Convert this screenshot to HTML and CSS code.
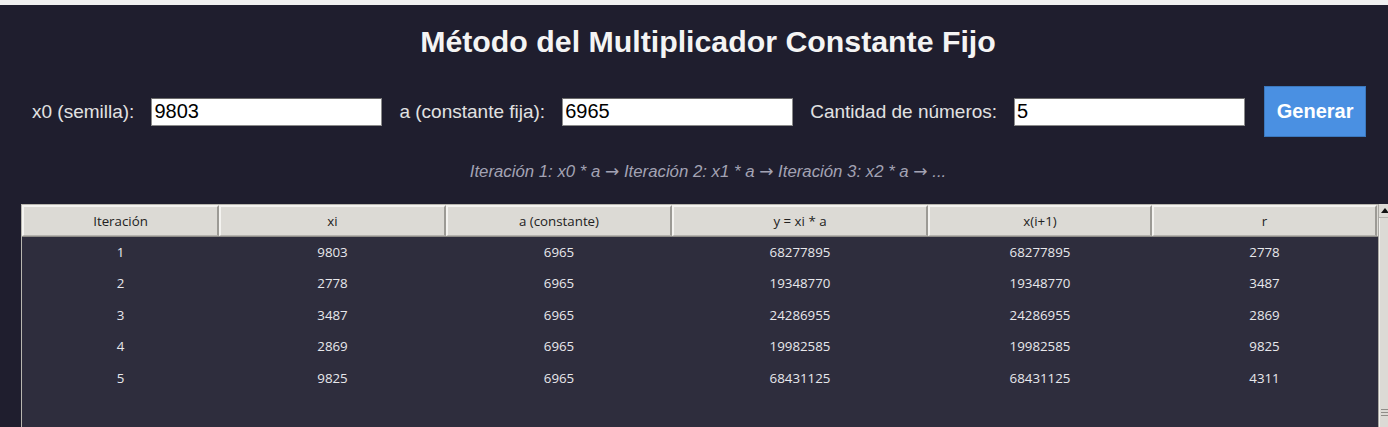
FILE: index.html
```html
<!DOCTYPE html>
<html lang="es">
<head>
<meta charset="utf-8">
<title>Método del Multiplicador Constante Fijo</title>
<link rel="stylesheet" href="styles.css">
</head>
<body>
<div class="topstrip"></div>
<main class="app">
  <h1 class="title">Método del Multiplicador Constante Fijo</h1>
  <div class="form-row">
    <label class="lbl" for="x0">x0 (semilla):</label>
    <input class="inp" id="x0" type="text" value="9803">
    <label class="lbl" for="a">a (constante fija):</label>
    <input class="inp" id="a" type="text" value="6965">
    <label class="lbl" for="n">Cantidad de números:</label>
    <input class="inp" id="n" type="text" value="5">
    <button class="btn" type="button">Generar</button>
  </div>
  <p class="hint">Iteración 1: x0 * a <span class="arr">→</span> Iteración 2: x1 * a <span class="arr">→</span> Iteración 3: x2 * a <span class="arr">→</span> ...</p>
  <div class="table-wrap">
    <div class="table">
      <div class="thead">
        <div class="th">Iteración</div>
        <div class="th">xi</div>
        <div class="th">a (constante)</div>
        <div class="th">y = xi * a</div>
        <div class="th">x(i+1)</div>
        <div class="th">r</div>
      </div>
      <div class="tbody">
        <div class="tr"><div>1</div><div>9803</div><div>6965</div><div>68277895</div><div>68277895</div><div>2778</div></div>
        <div class="tr"><div>2</div><div>2778</div><div>6965</div><div>19348770</div><div>19348770</div><div>3487</div></div>
        <div class="tr"><div>3</div><div>3487</div><div>6965</div><div>24286955</div><div>24286955</div><div>2869</div></div>
        <div class="tr"><div>4</div><div>2869</div><div>6965</div><div>19982585</div><div>19982585</div><div>9825</div></div>
        <div class="tr"><div>5</div><div>9825</div><div>6965</div><div>68431125</div><div>68431125</div><div>4311</div></div>
      </div>
    </div>
    <div class="scrollbar">
      <div class="sb-arrow"></div>
      <div class="sb-track"><div class="sb-grip"></div></div>
    </div>
  </div>
</main>
</body>
</html>
```

FILE: styles.css
```css
* { box-sizing: border-box; }
html, body {
  margin: 0;
  padding: 0;
  height: 100%;
  overflow: hidden;
}
body {
  background: #1f1e2e;
  font-family: "Liberation Sans", Arial, sans-serif;
  color: #e6e6e6;
}
.topstrip {
  height: 5px;
  background: #f0f0f0;
}
.app {
  width: 1416px;
  display: flex;
  flex-direction: column;
}
.title {
  margin: 20px 0 0;
  text-align: center;
  font-size: 30.3px;
  line-height: 34px;
  font-weight: bold;
  color: #f4f4f4;
}
.form-row {
  display: flex;
  align-items: center;
  margin-top: 27px;
  padding-left: 32px;
  height: 51px;
}
.lbl {
  font-size: 19px;
  color: #e2e2e2;
  margin-right: 17px;
}
.inp {
  width: 231px;
  height: 28px;
  margin-right: 17px;
  border: 1px solid #8a8a8a;
  border-top-color: #6a6a6a;
  background: #ffffff;
  font-family: "Liberation Sans", Arial, sans-serif;
  font-size: 20px;
  color: #000;
  padding: 0 2px;
  outline: none;
}
.btn {
  width: 102px;
  height: 51px;
  margin-left: 2px;
  border: 1px solid #3b78bd;
  background: #4a90e2;
  color: #ffffff;
  font-family: "Liberation Sans", Arial, sans-serif;
  font-size: 20px;
  font-weight: bold;
}
.hint {
  margin: 24px 0 0;
  text-align: center;
  font-style: italic;
  font-size: 16.8px;
  line-height: 20px;
  color: #a3a3b4;
}
.arr {
  font-family: "DejaVu Sans", sans-serif;
  font-style: normal;
  font-size: 17px;
}
.table-wrap {
  display: flex;
  margin: 22px 0 0 21px;
  height: 240px;
}
.table {
  width: 1357px;
  flex: none;
  border-left: 1px solid #b9b7b0;
  border-top: 1px solid #b9b7b0;
  background: #2e2d3d;
  display: flex;
  flex-direction: column;
  font-family: "Open Sans", "Noto Sans", sans-serif;
  font-size: 13.3px;
}
.thead, .tr {
  display: grid;
  grid-template-columns: 197px 227px 226px 256px 224px 225px;
}
.thead {
  height: 32px;
  background: #dcdad5;
  border-bottom: 1px solid #8d8b87;
}
.th {
  display: flex;
  align-items: center;
  justify-content: center;
  color: #222;
  border-top: 2px solid #f4f3f0;
  border-left: 2px solid #f4f3f0;
  border-right: 2px solid #9c9a95;
  border-bottom: 1px solid #b4b2ad;
}
.tr {
  height: 31.5px;
  color: #e8e8ec;
}
.tr div {
  display: flex;
  align-items: center;
  justify-content: center;
  padding-bottom: 2px;
}
.scrollbar {
  width: 11px;
  display: flex;
  flex-direction: column;
  background: #dcdad5;
  border-left: 1px solid #aaa8a3;
}
.sb-arrow {
  height: 14px;
  position: relative;
  border-bottom: 1px solid #b5b3ae;
}
.sb-arrow::before {
  content: "";
  position: absolute;
  left: 2px;
  top: 4px;
  border-left: 4px solid transparent;
  border-right: 4px solid transparent;
  border-bottom: 5px solid #111;
}
.sb-track {
  flex: 1;
  position: relative;
  border-left: 1px solid #f2f1ee;
}
.sb-grip {
  position: absolute;
  left: 1px;
  right: 1px;
  top: 191px;
  height: 8px;
  background: repeating-linear-gradient(to bottom, #8f8d88 0 1px, #dcdad5 1px 3px);
}
```
